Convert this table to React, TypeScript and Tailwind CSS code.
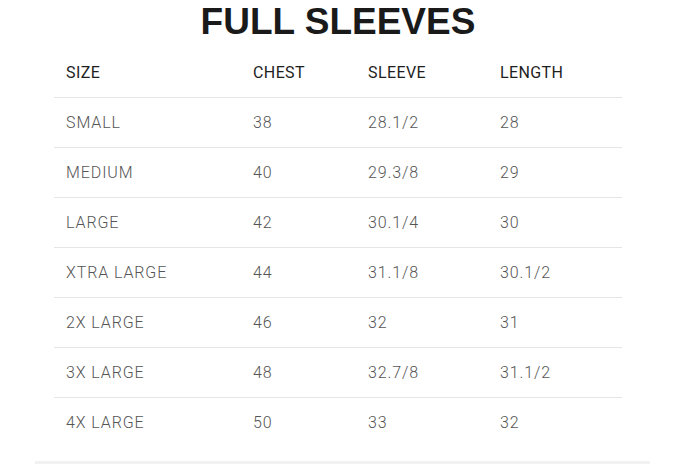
const rows = [
  { size: "SMALL", chest: "38", sleeve: "28.1/2", length: "28" },
  { size: "MEDIUM", chest: "40", sleeve: "29.3/8", length: "29" },
  { size: "LARGE", chest: "42", sleeve: "30.1/4", length: "30" },
  { size: "XTRA LARGE", chest: "44", sleeve: "31.1/8", length: "30.1/2" },
  { size: "2X LARGE", chest: "46", sleeve: "32", length: "31" },
  { size: "3X LARGE", chest: "48", sleeve: "32.7/8", length: "31.1/2" },
  { size: "4X LARGE", chest: "50", sleeve: "33", length: "32" },
];

const cols = "grid grid-cols-[187px_115px_132px_134px]";

export default function App() {
  return (
    <div className="w-[676px] h-[464px] bg-white flex flex-col overflow-hidden">
      <div className="h-[48px] flex justify-center">
        <h1 className="mt-[3px] text-[37px] leading-none font-bold text-[#1a1a1a] font-['Liberation_Sans',Arial,sans-serif]">
          FULL SLEEVES
        </h1>
      </div>
      <div className="ml-[54px] w-[568px] font-['Roboto',sans-serif] text-[16px]">
        <div className={`${cols} h-[50px] items-center border-b border-[#e6e6e6] text-[#1e1e1e] font-[450] tracking-[0.4px]`}>
          <span className="pl-3">SIZE</span>
          <span className="pl-3">CHEST</span>
          <span className="pl-3">SLEEVE</span>
          <span className="pl-3">LENGTH</span>
        </div>
        {rows.map((r, i) => (
          <div
            key={r.size}
            className={`${cols} h-[50px] items-center text-[#555] font-light tracking-[0.9px] ${
              i < rows.length - 1 ? "border-b border-[#e6e6e6]" : ""
            }`}
          >
            <span className="pl-3">{r.size}</span>
            <span className="pl-3">{r.chest}</span>
            <span className="pl-3">{r.sleeve}</span>
            <span className="pl-3">{r.length}</span>
          </div>
        ))}
      </div>
      <div className="flex-1" />
      <div className="ml-[35px] w-[615px] h-[3px] bg-[#f2f2f2]" />
    </div>
  );
}
